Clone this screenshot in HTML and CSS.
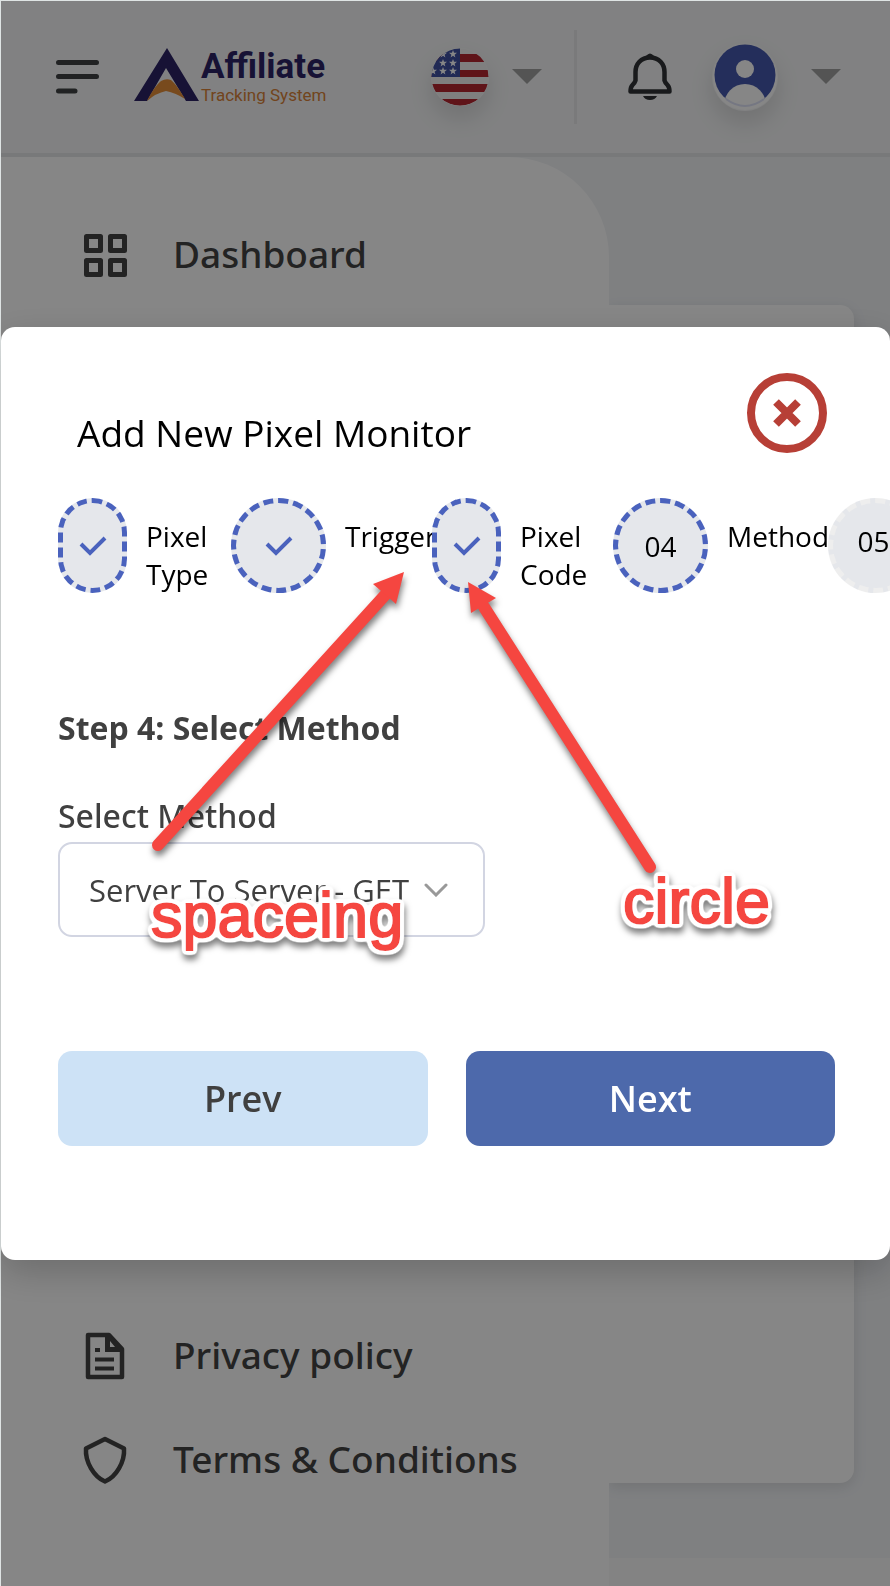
FILE: index.html
```html
<!DOCTYPE html>
<html lang="en">
<head>
<meta charset="utf-8">
<meta name="viewport" content="width=device-width, initial-scale=1">
<title>Affiliate Tracking System</title>
<link rel="stylesheet" href="styles.css">
</head>
<body>
<div class="app">
  <header class="topbar">
    <button class="icon-button menu-toggle" aria-label="Toggle menu">
      <svg width="43" height="34" viewBox="0 0 43 34"><path d="M2.500 2.500H40.500M2.500 16.500H40.500M2.500 31H19" fill="none" stroke="#3f4244" stroke-width="5" stroke-linecap="round"/></svg>
    </button>
    <a class="logo" href="#" aria-label="Affiliate Tracking System">
      <svg width="65" height="58" viewBox="0 0 65 58"><path d="M33 0L65 53H52L32 20L13 53H0Z" fill="#2d2466"/><path d="M13 53C17 45 22 37 27 33Q32 30 37 32C42 36 47 44 51 51Q42 45 32 43Q22 45 13 53Z" fill="#e48d38"/></svg>
      <span class="logo-text"><span class="logo-name">Affiliate</span><span class="logo-sub">Tracking System</span></span>
    </a>
    <button class="icon-button language" aria-label="Language">
      <svg class="flag" width="58" height="58" viewBox="0 0 58 58">
        <defs><clipPath id="flag-clip"><circle cx="29" cy="29" r="28.500"/></clipPath><path id="star" d="M0-4L1-1.200H4L1.600.700L2.400 3.600L0 1.800L-2.400 3.600L-1.600.700L-4-1.200H-1Z" fill="#fff"/></defs>
        <g clip-path="url(#flag-clip)"><path d="M0 0H58V58H0Z" fill="#f2f2f2"/><path d="M0 6H58V14H0ZM0 22H58V29H0ZM0 36H58V44H0ZM0 51H58V58H0Z" fill="#b52631"/><path d="M0 0H29V29H0Z" fill="#3f51a3"/>
        <use href="#star" x="12" y="6"/><use href="#star" x="22" y="6"/><use href="#star" x="12" y="15"/><use href="#star" x="22" y="15"/><use href="#star" x="2" y="23"/><use href="#star" x="12" y="23"/><use href="#star" x="22" y="23"/></g>
      </svg>
      <svg width="30" height="15" viewBox="0 0 30 15"><path d="M0 0H30L15 15Z" fill="#a0a0a0"/></svg>
    </button>
    <span class="divider"></span>
    <button class="icon-button bell" aria-label="Notifications">
      <svg width="44" height="48" viewBox="0 0 44 48"><path d="M22 4.500C13 4.500 7.500 11 7.500 19V27.500Q7 29.500 4.500 32Q2.500 34 2.500 38.500H41.500Q41.500 34 39.500 32Q37 29.500 36.500 27.500V19C36.500 11 31 4.500 22 4.500Z" fill="none" stroke="#303336" stroke-width="4.500" stroke-linejoin="round"/><path d="M18 3Q22-2 26 3ZM15 43H29Q27 47 22 47Q17 47 15 43Z" fill="#303336"/></svg>
    </button>
    <button class="icon-button account" aria-label="Account">
      <svg class="avatar" width="66" height="68" viewBox="0 0 66 68"><defs><clipPath id="avatar-clip"><circle cx="33" cy="32" r="30.500"/></clipPath></defs><circle cx="33" cy="35" r="32" fill="#fff"/><g clip-path="url(#avatar-clip)"><path d="M0 0H66V68H0Z" fill="#4558ad"/><circle cx="33" cy="26" r="9" fill="#fff"/><circle cx="33" cy="62" r="21" fill="#fff"/></g><path d="M14 56Q33 70 52 56" fill="none" stroke="#dfe3f8" stroke-width="2"/></svg>
      <svg width="30" height="15" viewBox="0 0 30 15"><path d="M0 0H30L15 15Z" fill="#a0a0a0"/></svg>
    </button>
  </header>
  <div class="layout">
    <nav class="sidebar">
      <a class="nav-link" href="#">
        <svg width="48" height="48" viewBox="0 0 48 48"><path d="M5.500 5.500H19.500V19.500H5.500ZM29.500 5.500H43.500V19.500H29.500ZM5.500 29.500H19.500V43.500H5.500ZM29.500 29.500H43.500V43.500H29.500Z" fill="none" stroke="#434343" stroke-width="5" stroke-linejoin="round"/></svg>
        <span class="nav-text">Dashboard</span>
      </a>
      <div class="nav-group">
        <a class="nav-link" href="#">
          <svg width="48" height="48" viewBox="0 0 48 48"><path d="M7 3H28L41 17V45H7Z" fill="none" stroke="#434343" stroke-width="4.500" stroke-linejoin="round"/><path d="M24 3H29L41 16V20H24ZM29 9V15H34Z" fill="#434343" fill-rule="evenodd"/><path d="M14 16V20H19V16ZM14 25.500V29.500H33V25.500ZM14 34.500V38.500H33V34.500Z" fill="#434343"/></svg>
          <span class="nav-text">Privacy policy</span>
        </a>
        <a class="nav-link" href="#">
          <svg width="48" height="48" viewBox="0 0 48 48"><path d="M24 3L43 12.500C44 26 35 41 24 45.500C13 41 4 26 5 12.500Z" fill="none" stroke="#434343" stroke-width="4.500" stroke-linejoin="round"/></svg>
          <span class="nav-text">Terms &amp; Conditions</span>
        </a>
      </div>
    </nav>
    <main class="content"><div class="card"></div><footer class="footer"></footer></main>
  </div>
</div>

<div class="backdrop">
  <section class="modal" role="dialog" aria-modal="true" aria-labelledby="modal-title">
    <div class="modal-head">
      <h1 class="modal-title" id="modal-title">Add New Pixel Monitor</h1>
      <button class="close" aria-label="Close"><svg width="28" height="28" viewBox="0 0 28 28"><path d="M3 3L25 25M25 3L3 25" stroke="#b73f36" stroke-width="8"/></svg></button>
    </div>
    <ol class="steps">
      <li class="step"><span class="badge"><svg width="28" height="22" viewBox="0 0 28 22"><path d="M2 9L11 18L26 3" fill="none" stroke="#4a62bd" stroke-width="4"/></svg></span><span class="step-label">Pixel Type</span></li>
      <li class="step"><span class="badge badge-round"><svg width="28" height="22" viewBox="0 0 28 22"><path d="M2 9L11 18L26 3" fill="none" stroke="#4a62bd" stroke-width="4"/></svg></span><span class="step-label">Trigger</span></li>
      <li class="step"><span class="badge"><svg width="28" height="22" viewBox="0 0 28 22"><path d="M2 9L11 18L26 3" fill="none" stroke="#4a62bd" stroke-width="4"/></svg></span><span class="step-label">Pixel Code</span></li>
      <li class="step"><span class="badge badge-round">04</span><span class="step-label">Method</span></li>
      <li class="step"><span class="badge badge-round badge-pending">05</span></li>
    </ol>
    <form class="form">
      <h2 class="form-title">Step 4: Select Method</h2>
      <label class="field-label" for="method">Select Method</label>
      <div class="select-wrap">
        <select class="select" id="method"><option>Server To Server - GET</option></select>
        <svg class="chevron" width="24" height="14" viewBox="0 0 24 14"><path d="M2 2L12 12L22 2" fill="none" stroke="#999" stroke-width="3" stroke-linecap="round"/></svg>
      </div>
      <div class="actions">
        <button class="button" type="button">Prev</button>
        <button class="button button-primary" type="button">Next</button>
      </div>
    </form>
    <svg class="annotations" width="889" height="933" viewBox="1 327 889 933">
      <defs>
        <filter id="white-outline" x="-10%" y="-20%" width="120%" height="140%">
          <feMorphology in="SourceAlpha" operator="dilate" radius="2" result="wide"/>
          <feGaussianBlur in="wide" stdDeviation="2" result="soft"/>
          <feComponentTransfer in="soft" result="edge"><feFuncR type="linear" slope="0" intercept="1"/><feFuncG type="linear" slope="0" intercept="1"/><feFuncB type="linear" slope="0" intercept="1"/><feFuncA type="linear" slope="6" intercept="-.6"/></feComponentTransfer>
          <feMerge><feMergeNode in="edge"/><feMergeNode in="SourceGraphic"/></feMerge>
        </filter>
      </defs>
      <g fill="#f54640" stroke="#f54640">
        <path d="M158 845L386 594" stroke-width="12" stroke-linecap="round"/>
        <path d="M404 572L373 584L396 604Z" stroke="none"/>
        <path d="M650 867L484 607" stroke-width="12" stroke-linecap="round"/>
        <path d="M468 582L471 613L496 598Z" stroke="none"/>
      </g>
      <text class="note" x="151" y="937">spaceing</text>
      <text class="note" x="623" y="923">circle</text>
    </svg>
  </section>
</div>
</body>
</html>
```
FILE: styles.css
```css
* { box-sizing: border-box; }
body {
  margin: 0;
  font-family: "Open Sans", "Noto Sans", sans-serif;
  color: #404040;
  overflow: hidden;
}
button, select { font: inherit; color: inherit; }
svg { display: block; flex: none; }

.app {
  min-height: 100vh;
  display: flex;
  flex-direction: column;
  background: #f1f3f6;
}
.topbar {
  height: 157px;
  flex: none;
  display: flex;
  align-items: center;
  padding: 0 49px 0 56px;
  background: #f5f6f7;
  border-bottom: 4px solid #e4e6e9;
}
.icon-button {
  display: flex;
  align-items: center;
  padding: 0;
  border: 0;
  background: none;
}
.logo {
  display: flex;
  align-items: center;
  gap: 2px;
  margin: 0 auto 0 35px;
  text-decoration: none;
}
.logo-text {
  display: flex;
  flex-direction: column;
  font-family: Roboto, "Open Sans", sans-serif;
  white-space: nowrap;
}
.logo-name { font-size: 35px; line-height: 36px; font-weight: 700; color: #2d2466; }
.logo-sub { font-size: 17px; line-height: 20px; color: #d98238; }
.language { gap: 23px; }
.flag, .avatar { border-radius: 50%; box-shadow: 0 12px 24px rgba(0, 0, 0, .12); }
.divider { width: 3px; height: 94px; margin: 0 51px 0 32px; background: #e8e9eb; }
.account { gap: 33px; margin-left: 40px; }

.layout { flex: 1; display: flex; }
.sidebar {
  position: relative;
  z-index: 1;
  width: 609px;
  flex: none;
  display: flex;
  flex-direction: column;
  justify-content: space-between;
  padding: 74px 24px 102px 81px;
  background: #fff;
  border-top-right-radius: 100px;
}
.nav-group { display: flex; flex-direction: column; gap: 56px; }
.nav-link {
  display: flex;
  align-items: center;
  gap: 44px;
  font-family: "Noto Sans", "Open Sans", sans-serif;
  font-size: 37px;
  line-height: 44px;
  font-weight: 500;
  color: #434343;
  text-decoration: none;
  white-space: nowrap;
}
.nav-text { padding-bottom: 2px; }
.content { flex: 1; display: flex; flex-direction: column; padding-top: 148px; }
.card {
  flex: 1;
  margin-right: 36px;
  background: #fff;
  border-radius: 0 14px 14px 0;
  box-shadow: 0 4px 14px rgba(0, 0, 0, .1);
}
.footer { height: 28px; margin-top: 75px; background: #fafafa; }

.backdrop {
  position: fixed;
  inset: 0;
  z-index: 10;
  display: flex;
  align-items: center;
  background: rgba(0, 0, 0, .475);
  border: solid #dfe4e4;
  border-width: 1px 0 0 1px;
}
.modal {
  position: relative;
  flex: 1;
  min-width: 0;
  padding: 46px 55px 114px 57px;
  overflow: hidden;
  background: #fff;
  border-radius: 14px;
  box-shadow: 0 12px 36px rgba(0, 0, 0, .2);
}
.modal-head {
  display: flex;
  justify-content: space-between;
  align-items: flex-start;
  padding: 0 8px 0 19px;
}
.modal-title { margin: 35px 0 0; font-size: 37px; line-height: 50px; font-weight: 400; color: #000; }
.close {
  width: 80px;
  height: 80px;
  display: grid;
  place-items: center;
  padding: 0;
  background: none;
  border: 8px solid #b73f36;
  border-radius: 50%;
}
.steps {
  display: grid;
  grid-template-columns: 173px 201px 181px 215px 220px;
  margin: 40px 0 0;
  padding: 0;
  list-style: none;
}
.step {
  display: flex;
  gap: 19px;
  font-size: 28px;
  line-height: 38px;
  color: #000;
}
.badge {
  width: 69px;
  height: 95px;
  flex: none;
  display: grid;
  place-items: center;
  background: #e5e7eb;
  border: 5px dashed #4a62bd;
  border-radius: 48px;
}
.badge-round { width: 95px; }
.badge-pending { padding: 0 4px 10px 0; border-color: #eee; }
.step-label { width: min-content; padding-top: 19px; }
.form-title { margin: 111px 0 0; font-size: 32px; line-height: 48px; font-weight: 700; }
.field-label {
  display: block;
  margin-top: 40px;
  font-family: "Noto Sans", "Open Sans", sans-serif;
  font-size: 32px;
  line-height: 48px;
  font-weight: 500;
}
.select-wrap { position: relative; width: 427px; max-width: 100%; margin-top: 2px; }
.select {
  width: 100%;
  height: 95px;
  padding: 0 60px 0 29px;
  appearance: none;
  font-size: 31px;
  background: #fff;
  border: 2px solid #d2d5e2;
  border-radius: 14px;
}
.chevron { position: absolute; right: 37px; top: 41px; pointer-events: none; }
.actions { display: grid; grid-template-columns: 1fr 1fr; gap: 38px; margin-top: 114px; }
.button {
  height: 95px;
  font-size: 36px;
  font-weight: 600;
  border: 0;
  border-radius: 14px;
  background: #cde2f6;
}
.button-primary { background: #4d69ab; color: #fff; }
.annotations {
  position: absolute;
  left: 0;
  top: 0;
  pointer-events: none;
  filter: drop-shadow(1px 5px 3px rgba(0, 0, 0, .5));
}
.note {
  font-family: "Liberation Sans", Arial, sans-serif;
  font-size: 63px;
  fill: #f54640;
  stroke: #f54640;
  stroke-width: 2px;
  filter: url(#white-outline);
}
```
